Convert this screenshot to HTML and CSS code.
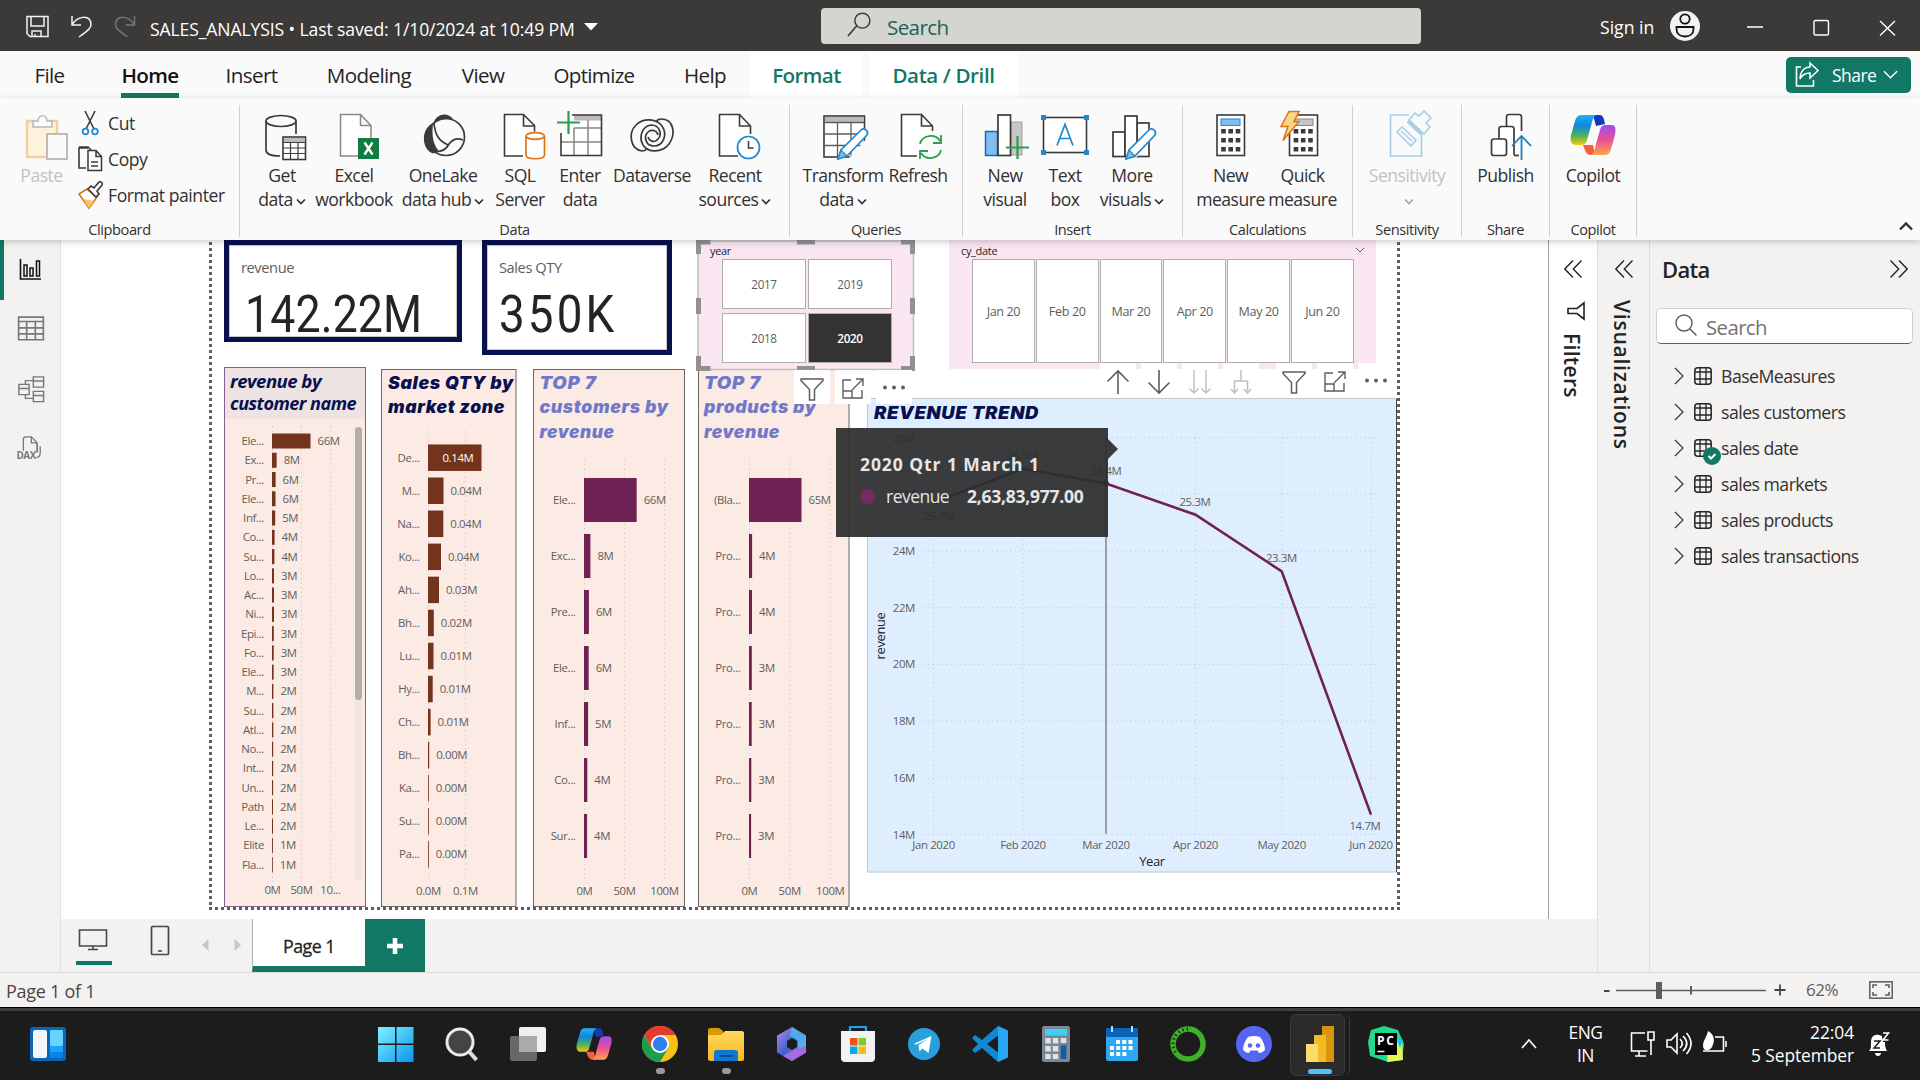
FILE: index.html
```html
<!DOCTYPE html>
<html lang="en">
<head>
<meta charset="utf-8">
<title>SALES_ANALYSIS - Power BI Desktop</title>
<link rel="stylesheet" href="styles.css">
</head>
<body>
<svg class="defs" width="0" height="0">
  <defs>
    <linearGradient id="cpA" x1="0" y1="0" x2="0" y2="1"><stop offset="0" stop-color="#1cb4f5"/><stop offset=".35" stop-color="#1386dd"/><stop offset=".7" stop-color="#4db35a"/><stop offset="1" stop-color="#ffc800"/></linearGradient>
    <linearGradient id="cpB" x1="0" y1="0" x2="0" y2="1"><stop offset="0" stop-color="#9c4df0"/><stop offset=".5" stop-color="#ec4f93"/><stop offset="1" stop-color="#ffa64d"/></linearGradient>
    <linearGradient id="win" x1="0" y1="0" x2="1" y2="1"><stop offset="0" stop-color="#7df3ff"/><stop offset="1" stop-color="#0c93f0"/></linearGradient>
    <linearGradient id="yel" x1="0" y1="0" x2="0" y2="1"><stop offset="0" stop-color="#ffd863"/><stop offset="1" stop-color="#f7b91a"/></linearGradient>
    <linearGradient id="m365" x1="0" y1="0" x2="1" y2="1"><stop offset="0" stop-color="#b58af0"/><stop offset=".5" stop-color="#3c62c8"/><stop offset="1" stop-color="#c58ff5"/></linearGradient>
    <symbol id="copilot" viewBox="0 0 46 40">
      <path d="M23 0h7c3 0 4 4 5 9l-9 2z" fill="#1538c4"/>
      <path d="M13 30h10l2 10h-4c-5 0-6-5-8-10z" fill="#f4603c"/>
      <path d="M11 0h15c-3 2-4 6-5 11l-4 14c-1 4-3 5-6 5H6C1 30 0 26 1 20L5 6c1-4 3-6 6-6z" fill="url(#cpA)"/>
      <path d="M35 40H21c3-2 4-6 5-11l4-14c1-4 3-5 6-5h5c5 0 5 4 4 10l-4 14c-1 4-3 6-6 6z" fill="url(#cpB)"/>
    </symbol>
    <symbol id="funnel" viewBox="0 0 24 24"><path d="M1 2h22v1.500l-8.500 9V23h-5V12.500L1 3.500z" fill="#fff" stroke="#605e5c" stroke-width="1.500"/></symbol>
    <symbol id="focus" viewBox="0 0 24 24"><path d="M10 3H2v18h19v-8M2 14h9v7M15 2h7v7M22 2L11 13" fill="none" stroke="#605e5c" stroke-width="1.400"/></symbol>
    <symbol id="dots" viewBox="0 0 24 24"><g fill="#605e5c"><circle cx="3" cy="10.500" r="2"/><circle cx="12" cy="10.500" r="2"/><circle cx="21" cy="10.500" r="2"/></g></symbol>
    <symbol id="tbl" viewBox="0 0 18 18"><rect x=".8" y=".8" width="16.400" height="16.400" rx="3" fill="none" stroke="#252423" stroke-width="1.500"/><path d="M6 1v16M12 1v16M1 5h16M1 12h16" stroke="#252423" stroke-width="1.300"/></symbol>
    <symbol id="chev" viewBox="0 0 10 18"><path d="M1 1l8 8-8 8" fill="none" stroke="#3b3a39" stroke-width="1.200"/></symbol>
    <symbol id="dbl" viewBox="0 0 18 18"><path d="M9 .5L.8 9 9 17.500M17.500.5L9.300 9l8.200 8.500" fill="none" stroke="#252423" stroke-width="1.400"/></symbol>
    <symbol id="dn" viewBox="0 0 10 8"><path d="M1 1.500l4 4 4-4" fill="none" stroke="currentColor" stroke-width="1.700"/></symbol>
  </defs>
</svg>

<div class="app">
  <header class="titlebar">
    <svg class="quick" viewBox="20 0 120 51">
      <g fill="none" stroke="#f3f2f1" stroke-width="1.500">
        <path d="M27 16.500h17l4 0v20H30l-3-3zM31 17v9h13v-9M32 37v-6h9v6M35 37v-3"/>
        <path d="M72 16v9h9M72 25c5-9 18-11 19-1 0 4-2 6-12 13"/>
        <path d="M134.500 16v9h-9M134.500 25c-5-9-18-11-19-1 0 4 2 6 12 13" stroke="#777573"/>
      </g>
    </svg>
    <span class="filename">SALES_ANALYSIS • Last saved: 1/10/2024 at 10:49 PM</span>
    <svg class="tcaret" viewBox="0 0 14 8"><path d="M0 0h14L7 7.500z" fill="#fff"/></svg>
    <div class="tsearch">
      <svg viewBox="0 0 26 26"><circle cx="16" cy="9" r="7.800" fill="none" stroke="#3b3a39" stroke-width="1.500"/><path d="M10 14.500L1 25" stroke="#3b3a39" stroke-width="1.700"/></svg>
      <span>Search</span>
    </div>
    <span class="signin">Sign in</span>
    <svg class="winctl" viewBox="1668 0 252 51">
      <circle cx="1685" cy="26" r="15" fill="#f3f2f1"/>
      <circle cx="1685" cy="19" r="4.700" fill="none" stroke="#111" stroke-width="1.800"/>
      <path d="M1676.500 27h17v2c0 5-4 7.500-8.500 7.500s-8.500-2.500-8.500-7.500z" fill="none" stroke="#111" stroke-width="1.800"/>
      <g fill="none" stroke="#fff" stroke-width="1.400"><path d="M1747 27h16M1880 21l15 14.500M1895 21l-15 14.500"/><rect x="1814" y="20.500" width="14.500" height="14.500" rx="1.500"/></g>
    </svg>
  </header>

  <nav class="tabs">
    <span class="t file">File</span><span class="t home">Home</span><span class="t insert">Insert</span><span class="t modeling">Modeling</span><span class="t view">View</span><span class="t optimize">Optimize</span><span class="t help">Help</span><span class="t ctx format">Format</span><span class="t ctx drill">Data / Drill</span>
    <button class="share"><svg viewBox="0 0 24 26"><path d="M6 5H1.500v19h17v-6" fill="none" stroke="#fff" stroke-width="1.600"/><path d="M15 1l8 7.500L15 16v-5c-5 0-8 2-10 6 0-7 4-12 10-12z" fill="none" stroke="#fff" stroke-width="1.500"/></svg><span>Share</span><svg class="sdn" viewBox="0 0 16 10"><path d="M1 1l7 7 7-7" fill="none" stroke="#fff" stroke-width="1.600"/></svg></button>
  </nav>

  <section class="ribbon">
    <div class="group g-clip">
      <div class="btns">
        <div class="b off w-paste">
          <svg viewBox="17 112 48 48"><path d="M27 121h29v35H27z" fill="#fdf3da"/><path d="M35 121h-9v36h19M47 121h9v12" fill="none" stroke="#f2cfa0" stroke-width="2.500"/><path d="M32 127v-6h5c0-7 9-7 9 0h5v6z" fill="#fafafa" stroke="#b8b6b4" stroke-width="1.500"/><rect x="46" y="134" width="20" height="25" fill="#fafafa" stroke="#a9a7a5" stroke-width="1.500"/></svg>
          <span>Paste</span>
        </div>
        <div class="cliplist">
          <div><svg viewBox="78 110 26 28"><path d="M85 112l9 18M95 112l-9 18" stroke="#3b3a39" stroke-width="1.600"/><circle cx="85.500" cy="132.500" r="2.800" fill="none" stroke="#1e88d2" stroke-width="1.800"/><circle cx="95" cy="132.500" r="2.800" fill="none" stroke="#1e88d2" stroke-width="1.800"/></svg>Cut</div>
          <div><svg viewBox="78 146 26 28"><path d="M88 149h-9v20h7M79 148h9l3 3" fill="none" stroke="#3b3a39" stroke-width="1.600"/><path d="M88 151.500h8l5.500 6v14H88zM96 151.500v6h5.500M91 163h7M91 167h7" fill="#fafafa" stroke="#3b3a39" stroke-width="1.500"/></svg>Copy</div>
          <div><svg viewBox="78 182 26 28"><path d="M79 195l8-5 10 8-8 11z" fill="#fff" stroke="#dd7413" stroke-width="1.700"/><path d="M83 200l11 2-5 7z" fill="#f9c45e"/><path d="M88 190l3-3 3 2 5-6c2-1 4 1 3 3l-5 6 2 3-3 3z" fill="#fafafa" stroke="#3b3a39" stroke-width="1.600"/></svg>Format painter</div>
        </div>
      </div>
      <div class="gl">Clipboard</div>
    </div>

    <div class="group g-data">
      <div class="btns">
        <div class="b w64"><svg viewBox="258 112 48 48"><g fill="none" stroke="#3b3a39" stroke-width="1.700"><ellipse cx="281" cy="121" rx="15" ry="5.500"/><path d="M266 121v29c0 4 6 6 14 6M296 121v13"/></g><rect x="283" y="137" width="22.500" height="22.500" fill="#fff" stroke="#3b3a39" stroke-width="1.600"/><path d="M284 138h20.500v4H284z" fill="#bdbbb9"/><path d="M283 142.500h22.500M283 148h22.500M283 153.500h22.500M290.500 142v17M298 142v17" stroke="#3b3a39" stroke-width="1.200"/></svg><span>Get<br>data<svg class="dn"><use href="#dn"/></svg></span></div>
        <div class="b w80"><svg viewBox="330 112 48 48"><path d="M358 156h-17.500V114.500h20l10.500 11v13M360.500 114.500v11H371" fill="#fff" stroke="#8a8886" stroke-width="1.500"/><rect x="358" y="138" width="21" height="21" fill="#107c41"/><path d="M364.500 142.500l8 12M372.500 142.500l-8 12" stroke="#fff" stroke-width="2.400"/></svg><span>Excel<br>workbook</span></div>
        <div class="b w98"><svg viewBox="419 112 48 48"><circle cx="446" cy="137" r="18.500" fill="#fafafa" stroke="#3b3a39" stroke-width="1.700"/><path d="M433 124c4-12 17-12 21-3-7-3-14-2-21 3zM433 123c-11 5-12 22-3 29 4 3 8 0 8-2-6-8-6-17-5-27z" fill="#3b3a39"/><path d="M434 123c1 12 5 18 14 22M430 151c10 2 16-1 19-7 4-5 9-6 14-4" fill="none" stroke="#3b3a39" stroke-width="1.700"/></svg><span>OneLake<br>data hub<svg class="dn"><use href="#dn"/></svg></span></div>
        <div class="b w56"><svg viewBox="496 112 48 48"><path d="M523 156h-18.500V114.500h19l11 11v6M523.500 114.500v11.500h11" fill="#fff" stroke="#3b3a39" stroke-width="1.600"/><path d="M526 136v19c0 5 18.500 5 18.500 0v-19" fill="#fff" stroke="#dd7413" stroke-width="1.700"/><ellipse cx="535.200" cy="136" rx="9.200" ry="3.400" fill="#fff" stroke="#dd7413" stroke-width="1.700"/></svg><span>SQL<br>Server</span></div>
        <div class="b w64"><svg viewBox="556 112 48 48"><rect x="561" y="115" width="40.500" height="40.500" fill="#fff"/><path d="M574 115h27.500v5.500H574z" fill="#bdbbb9"/><path d="M574 128h27M561 142h40.500M574 128v27M588 120v35" stroke="#8a8886" stroke-width="1.500"/><path d="M572 115h29.500v40.500H561V132" fill="none" stroke="#3b3a39" stroke-width="1.600"/><path d="M557 111h14v22h-14z" fill="#fafafa"/><path d="M568.500 111v23M557 122.500h23" stroke="#2d9d4e" stroke-width="2.200"/></svg><span>Enter<br>data</span></div>
        <div class="b w80"><svg viewBox="628 112 48 48"><g fill="none" stroke="#3b3a39" stroke-width="1.700"><path d="M642 151c-12-2-14-18-6-26 7-7 20-7 26 1 6 9 1 20-8 20-8 0-11-9-6-14 3-3 9-2 10 3"/><path d="M661 119c13 0 15 15 8 25-7 9-21 9-26 1-5-9 0-19 8-20 9 0 12 10 6 15-3 3-8 1-9-3"/><path d="M661 119c-2 0-4 1-5 3M642 151c3 0 4-1 5-2"/></g></svg><span>Dataverse</span></div>
        <div class="b w86"><svg viewBox="711 112 48 48"><path d="M738 156h-18.500V114.500h20l11 11.500v8M739.500 114.500V126h11" fill="#fff" stroke="#3b3a39" stroke-width="1.600"/><circle cx="748.500" cy="147.500" r="11" fill="#fff" stroke="#1e88d2" stroke-width="1.700"/><path d="M748.500 141v7h5" fill="none" stroke="#3b3a39" stroke-width="1.500"/></svg><span>Recent<br>sources<svg class="dn"><use href="#dn"/></svg></span></div>
      </div>
      <div class="gl">Data</div>
    </div>

    <div class="group g-query">
      <div class="btns">
        <div class="b w78"><svg viewBox="819 112 48 48"><rect x="824" y="116" width="40.500" height="41" fill="#fff" stroke="#3b3a39" stroke-width="1.600"/><path d="M825 117h39v5h-39z" fill="#bdbbb9"/><path d="M824 122.500h40.500M824 134h40.500M824 145.500h40.500M837.500 122v35M851 122v35" stroke="#605e5c" stroke-width="1.300"/><path d="M849 158h20v-22z" fill="#fafafa"/><path d="M838 159l3-9 20-20c3-3 8 1 6 5l-20 21z" fill="#fff" stroke="#1e88d2" stroke-width="1.700"/><path d="M838 159l3-9 6 6z" fill="#83b9ec" stroke="#1e88d2" stroke-width="1.200"/></svg><span>Transform<br>data<svg class="dn"><use href="#dn"/></svg></span></div>
        <div class="b w72"><svg viewBox="894 112 48 48"><path d="M917 156h-15.500V114.500h20l11 11.500v5M921.500 114.500V126h11" fill="#fff" stroke="#3b3a39" stroke-width="1.600"/><path d="M920 144c2-9 15-11 20-3M941 135v8h-8M941 150c-2 9-15 11-20 3M920 159v-8h8" fill="none" stroke="#2d9d4e" stroke-width="1.800"/></svg><span>Refresh</span></div>
      </div>
      <div class="gl">Queries</div>
    </div>

    <div class="group g-insert">
      <div class="btns">
        <div class="b w60"><svg viewBox="981 112 48 48"><rect x="985.500" y="131.500" width="12" height="24" fill="#83bdf0" stroke="#0f6cbd" stroke-width="1.500"/><rect x="1011" y="122" width="11" height="33" fill="#c8c6c4" stroke="#a19f9d"/><rect x="998" y="115" width="12.500" height="40.500" fill="#fff" stroke="#3b3a39" stroke-width="1.700"/><path d="M1006 147.500h23M1017.500 136v23" stroke="#2d9d4e" stroke-width="2.200"/></svg><span>New<br>visual</span></div>
        <div class="b w60"><svg viewBox="1041 112 48 48"><rect x="1043.500" y="117.500" width="43" height="35" fill="#fff" stroke="#3b3a39" stroke-width="1.600"/><path d="M1041 115h5v5h-5zM1084 115h5v5h-5zM1041 150h5v5h-5zM1084 150h5v5h-5z" fill="#1e88d2"/><path d="M1057 145.500l8-21 8 21M1060 138.500h10.500" fill="none" stroke="#1e88d2" stroke-width="1.700"/></svg><span>Text<br>box</span></div>
        <div class="b w74"><svg viewBox="1108 112 48 48"><g fill="#fff" stroke="#3b3a39" stroke-width="1.700"><rect x="1113" y="132" width="12" height="24.500"/><rect x="1137" y="123" width="12" height="33.500"/><rect x="1125" y="116" width="12" height="40.500"/></g><path d="M1136 158l18-22v-12l-26 28z" fill="#fafafa"/><path d="M1126 159l3-9 20-20c3-3 8 1 6 5l-20 21z" fill="#fff" stroke="#1e88d2" stroke-width="1.700"/><path d="M1126 159l3-9 6 6z" fill="#83b9ec" stroke="#1e88d2" stroke-width="1.200"/></svg><span>More<br>visuals<svg class="dn"><use href="#dn"/></svg></span></div>
      </div>
      <div class="gl">Insert</div>
    </div>

    <div class="group g-calc">
      <div class="btns">
        <div class="b w72"><svg viewBox="1207 112 48 48"><rect x="1217" y="115" width="27.500" height="40.500" fill="#fff" stroke="#3b3a39" stroke-width="1.600"/><rect x="1221" y="119" width="19" height="6.500" fill="#83bdf0" stroke="#1e88d2"/><path d="M1223.500 129v24M1230.700 129v24M1238 129v24" stroke="#3b3a39" stroke-width="4.600" stroke-dasharray="4.600 4.400"/></svg><span>New<br>measure</span></div>
        <div class="b w72"><svg viewBox="1279 112 48 48"><rect x="1289.500" y="115" width="28" height="40.500" fill="#fff" stroke="#3b3a39" stroke-width="1.600"/><rect x="1293" y="119" width="20" height="6.500" fill="#c8c6c4" stroke="#8a8886"/><path d="M1296 129v24M1303.200 129v24M1310.500 129v24" stroke="#3b3a39" stroke-width="4.600" stroke-dasharray="4.600 4.400"/><path d="M1289 111.500h10l-5 10h5l-16 19 5-14h-7z" fill="#fbd48c" stroke="#dd7413" stroke-width="1.500"/></svg><span>Quick<br>measure</span></div>
      </div>
      <div class="gl">Calculations</div>
    </div>

    <div class="group g-sens">
      <div class="btns">
        <div class="b off w84"><svg viewBox="1383 112 48 48"><path d="M1409 115h-18.500v41h31v-22" fill="none" stroke="#a6cfe6" stroke-width="1.700"/><g fill="none" stroke="#a6cfe6" stroke-width="1.600"><path d="M1397 132l5-5 14 13-5 6zM1401 131l11 10"/><path d="M1409 120l6-7 4 3 5-5 7 7-5 5 4 4-6 7z"/><path d="M1408 121l14 13" stroke-width="4"/></g></svg><span>Sensitivity<br><svg class="dn"><use href="#dn"/></svg></span></div>
      </div>
      <div class="gl">Sensitivity</div>
    </div>
    <div class="group g-share">
      <div class="btns">
        <div class="b w84"><svg viewBox="1481 112 48 48"><g fill="#fff" stroke="#3b3a39" stroke-width="1.700"><path d="M1505.500 155v-38c0-1.500 1-2.500 2.500-2.500h10c1.500 0 2.500 1 2.500 2.500v14"/><path d="M1498 155v-26c0-1.500 1-2.500 2.500-2.500h10c1.500 0 2.500 1 2.500 2.500v26"/><path d="M1513 155.500h5"/><rect x="1490.500" y="139" width="15" height="16.500" rx="2.500"/></g><path d="M1520.500 160v-23M1511 146l9.500-10 9.500 10" fill="none" stroke="#1e7fc0" stroke-width="1.800"/></svg><span>Publish</span></div>
      </div>
      <div class="gl">Share</div>
    </div>
    <div class="group g-cop">
      <div class="btns"><div class="b w84"><svg viewBox="0 0 48 48"><use href="#copilot" x="1" y="2" width="46" height="42"/></svg><span>Copilot</span></div></div>
      <div class="gl">Copilot</div>
    </div>
    <svg class="collapse" viewBox="0 0 16 10"><path d="M2 8.500l6-6 6 6" fill="none" stroke="#323130" stroke-width="2.400"/></svg>
  </section>

  <main class="work">
    <aside class="rail">
      <div class="ri on"><svg viewBox="19 258 23 23"><path d="M20.500 259v20H41" fill="none" stroke="#111" stroke-width="1.600"/><path d="M24 265h3v11h-3zM30 268h3v8h-3zM36.500 261h3v15h-3z" fill="none" stroke="#111" stroke-width="1.500"/></svg></div>
      <div class="ri"><svg viewBox="18 316 26 26"><path d="M19.500 318h23v21h-23zM19.500 322h23M19.500 328h23M19.500 333.500h23M27 322v17M35 322v17" fill="none" stroke="#797775" stroke-width="1.500"/></svg></div>
      <div class="ri"><svg viewBox="16 374 30 30"><g fill="none" stroke="#797775" stroke-width="1.500"><path d="M33.500 376h11v11h-11zM33.500 380.500h11M33.500 391.500h11v11h-11zM33.500 396h11M18 384h11v11H18zM18 388.500h11M25 384v-4h8M25 395v4h8"/></g></svg></div>
      <div class="ri dx"><svg viewBox="14 434 30 30"><path d="M23 451v-12.500c0-1.500 1-2.500 2.500-2.500h6l6 6v11M31.500 436v6.500h6M41 446v7c0 3-1 5-4 5M38 443v9" fill="none" stroke="#797775" stroke-width="1.400"/><text x="15.500" y="460" class="dax" textLength="21">DAX</text></svg></div>
    </aside>

    <div class="center">
      <div class="upper">
        <div class="canvas">
          <div class="frame fl"></div><div class="frame fr"></div><div class="frame fb"></div>
          <div class="card c1"><span>revenue</span><svg viewBox="0 0 180 48"><text x="0" y="48" transform="scale(.86 1)" textLength="206">142.22M</text></svg></div>
          <div class="card c2"><span>Sales QTY</span><svg viewBox="0 0 180 48"><text x="0" y="48" transform="scale(.88 1)" textLength="131">350K</text></svg></div>

          <div class="slicer cydate">
            <div class="sh"><span>cy_date</span><svg viewBox="0 0 10 6"><path d="M1 1l4 4 4-4" fill="none" stroke="#605e5c"/></svg></div>
            <div class="months"><i>Jan 20</i><i>Feb 20</i><i>Mar 20</i><i>Apr 20</i><i>May 20</i><i>Jun 20</i></div>
          </div>
          <div id="charts"></div>
          <div class="tools t2">
            <b><svg viewBox="0 0 24 24"><path d="M12 24V1M1.500 11.500L12 1l10.500 10.500" fill="none" stroke="#605e5c" stroke-width="1.600"/></svg></b>
            <b><svg viewBox="0 0 24 24"><path d="M12 0v23M1.500 12.500L12 23l10.500-10.500" fill="none" stroke="#605e5c" stroke-width="1.600"/></svg></b>
            <b><svg viewBox="0 0 24 24"><path d="M6 0v23M1.500 18.500L6 23l4.500-4.500M18 0v23M13.500 18.500L18 23l4.500-4.500" fill="none" stroke="#c2c0be" stroke-width="1.500"/></svg></b>
            <b><svg viewBox="0 0 24 24"><path d="M12 0v11M5.500 23V11h13v12M2 19l3.500 4L9 19M15 19l3.500 4 3.500-4" fill="none" stroke="#c2c0be" stroke-width="1.500"/></svg></b>
            <b class="gap"><svg><use href="#funnel"/></svg></b><b><svg><use href="#focus"/></svg></b><b><svg><use href="#dots"/></svg></b>
          </div>
          <div class="slicer year">
            <div class="sh"><span>year</span></div>
            <div class="years"><i>2017</i><i>2019</i><i>2018</i><i class="sel">2020</i></div>
            <svg class="handles" viewBox="695 240 221 136"><rect x="698" y="240.500" width="215.500" height="128.500" transform="translate(0 .5)" fill="none" stroke="#bdbbb9" stroke-width="1.500"/><path d="M698.500 254v-12h12M901 242h11.500v12M698.500 356v12.500h12M901 368.500h11.500V356M797 242h18M797 368.500h18M698.500 298v16M912.500 298v16" fill="none" stroke="#919191" stroke-width="5"/></svg>
          </div>
          <div class="tools t1"><b><svg><use href="#funnel"/></svg></b><b><svg><use href="#focus"/></svg></b><b><svg><use href="#dots"/></svg></b></div>
          <div class="tip">
            <div class="tt">2020 Qtr 1 March 1</div>
            <div class="tr"><em></em><span>revenue</span><strong>2,63,83,977.00</strong></div>
          </div>
        </div>
        <aside class="filters">
          <svg class="dblc"><use href="#dbl"/></svg>
          <svg class="fic" viewBox="0 0 18 18"><path d="M17 1v16l-7-5.500H1v-5h9z" fill="none" stroke="#252423" stroke-width="1.600"/></svg>
          <span class="vert">Filters</span>
        </aside>
      </div>
      <footer class="pages">
        <div class="dev on"><svg viewBox="78 928 30 24"><path d="M79.500 931h27v16h-27zM93 947v3M88 950.500h10" fill="none" stroke="#484644" stroke-width="1.600"/></svg></div>
        <div class="dev ph"><svg viewBox="150 925 20 31"><rect x="151.500" y="926.500" width="17" height="28" rx="1" fill="none" stroke="#484644" stroke-width="1.700"/><path d="M158 951h4" stroke="#484644" stroke-width="1.500"/></svg></div>
        <svg class="arr" viewBox="0 0 8 12"><path d="M7.500 0v12L1 6z" fill="#c8c6c4"/></svg>
        <svg class="arr a2" viewBox="0 0 8 12"><path d="M.5 0v12L7 6z" fill="#c8c6c4"/></svg>
        <div class="ptab">Page 1</div>
        <div class="padd"><svg viewBox="0 0 16 16"><path d="M8 0v16M0 8h16" stroke="#fff" stroke-width="4.600"/></svg></div>
      </footer>
    </div>

    <aside class="viz"><svg class="dblc"><use href="#dbl"/></svg><span class="vert">Visualizations</span></aside>
    <aside class="data">
      <div class="dh"><span>Data</span><svg class="flip"><use href="#dbl"/></svg></div>
      <div class="ds"><svg viewBox="0 0 22 22"><circle cx="9" cy="9" r="8" fill="none" stroke="#605e5c" stroke-width="1.400"/><path d="M15 15l6.500 6.500" stroke="#605e5c" stroke-width="1.500"/></svg><span>Search</span></div>
      <ul>
        <li><svg class="c"><use href="#chev"/></svg><svg class="g"><use href="#tbl"/></svg>BaseMeasures</li>
        <li><svg class="c"><use href="#chev"/></svg><svg class="g"><use href="#tbl"/></svg>sales customers</li>
        <li><svg class="c"><use href="#chev"/></svg><svg class="g"><use href="#tbl"/></svg>sales date<svg class="badge" viewBox="0 0 18 18"><circle cx="9" cy="9" r="9" fill="#117865"/><path d="M5.500 9l2.500 2.500 4.500-4.500" fill="none" stroke="#fff" stroke-width="2"/></svg></li>
        <li><svg class="c"><use href="#chev"/></svg><svg class="g"><use href="#tbl"/></svg>sales markets</li>
        <li><svg class="c"><use href="#chev"/></svg><svg class="g"><use href="#tbl"/></svg>sales products</li>
        <li><svg class="c"><use href="#chev"/></svg><svg class="g"><use href="#tbl"/></svg>sales transactions</li>
      </ul>
    </aside>
  </main>

  <div class="status">
    <span>Page 1 of 1</span>
    <svg viewBox="1600 973 190 34"><path d="M1604 991h5.500M1774.500 990h11M1780 984.500v11" stroke="#484644" stroke-width="1.800"/><path d="M1616 990.500h150" stroke="#605e5c" stroke-width="1.300"/><path d="M1691 986v8.500" stroke="#605e5c" stroke-width="2"/><path d="M1659 982v17" stroke="#605e5c" stroke-width="6"/></svg>
    <span class="pct">62%</span>
    <svg class="fit" viewBox="0 0 24 18"><rect x=".8" y=".8" width="22.400" height="16.400" fill="none" stroke="#605e5c" stroke-width="1.500"/><path d="M4 7V4h4M16 4h4v3M4 11v3h4M16 14h4v-3" fill="none" stroke="#605e5c" stroke-width="1.600"/></svg>
  </div>

  <div class="taskbar">
    <div class="slot widgets"><svg viewBox="0 0 36 34"><rect width="36" height="34" rx="3" fill="#0a64b8"/><rect x="3" y="3" width="14" height="28" rx="2" fill="#f2f6fa"/><rect x="20" y="3" width="13" height="16" rx="1" fill="#66d4ff"/><rect x="20" y="19" width="13" height="6" fill="#1ea2f5"/><rect x="20" y="25" width="13" height="6" fill="#0b83e8"/></svg></div>
    <div class="slot"><svg viewBox="0 0 36 36"><path d="M0 1h17v16.500H0zM18.500 1h17v16.500h-17zM0 19h17v17H0zM18.500 19h17v17h-17z" fill="url(#win)"/></svg></div>
    <div class="slot"><svg viewBox="0 0 36 36"><circle cx="16" cy="16" r="13" fill="#444" stroke="#ececec" stroke-width="3"/><path d="M25.500 26l7 8" stroke="#ddd" stroke-width="4"/></svg></div>
    <div class="slot"><svg viewBox="0 0 36 36"><rect x="9" y="1" width="27" height="25" rx="2" fill="#f0f0f0"/><rect x="0" y="10" width="27" height="25" rx="2" fill="#707070" fill-opacity=".9"/><path d="M9 10h18v16H9z" fill="#aaa"/></svg></div>
    <div class="slot"><svg viewBox="0 0 36 36"><use href="#copilot" x="0" y="1" width="36" height="34"/></svg></div>
    <div class="slot run"><svg viewBox="0 0 36 36"><circle cx="18" cy="18" r="18" fill="#fbc116"/><path d="M2.400 9A18 18 0 0 1 33.600 9H18L10 22z" fill="#e33b2e"/><path d="M2.400 9A18 18 0 0 0 18 36l8-13.500H10z" fill="#1e9e4a"/><circle cx="18" cy="18" r="9" fill="#fff"/><circle cx="18" cy="18" r="7.200" fill="#2d7ff0"/></svg></div>
    <div class="slot run"><svg viewBox="0 0 36 36"><path d="M0 4c0-1 1-2 2-2h9l4 3v7H0z" fill="#d99a08"/><path d="M0 9h13l4-4h17c1 0 2 1 2 2v26c0 1-1 2-2 2H2c-1 0-2-1-2-2z" fill="url(#yel)"/><path d="M6 35V27c0-2 1-3 3-3h18c2 0 3 1 3 3v8z" fill="#0f78d0"/><path d="M11 30h14" stroke="#0a4f94" stroke-width="2"/></svg></div>
    <div class="slot"><svg viewBox="0 0 36 36"><path d="M18 1l14 8.500v17L18 35 3 26.500v-17z" fill="url(#m365)"/><path d="M18 1l14 8.500v17l-8-5v-7l-8-4.500z" fill="#4cc3f5" fill-opacity=".75"/><path d="M32 20v6.500L18 35l-9-5 15-8z" fill="#a36be0"/><path d="M18 12l5 3v6l-5 3-5-3v-6z" fill="#1c1c1c"/></svg></div>
    <div class="slot"><svg viewBox="0 0 36 36"><path d="M10 6V1h16v5" fill="none" stroke="#1ea2f5" stroke-width="2.200"/><path d="M1 5h34v27c0 2-1 4-4 4H5c-3 0-4-2-4-4z" fill="#f2f2f2"/><path d="M10 12h7.500v7.500H10z" fill="#f1511b"/><path d="M18.500 12H26v7.500h-7.500z" fill="#80cc28"/><path d="M10 20.500h7.500V28H10z" fill="#00adef"/><path d="M18.500 20.500H26V28h-7.500z" fill="#fbbc09"/></svg></div>
    <div class="slot"><svg viewBox="0 0 36 36"><circle cx="18" cy="18" r="16" fill="#2a9fdc"/><path d="M7.500 18l18-8-3 17-6-4.500-3 3-1-6.500 9-6-11 5.500z" fill="#fff"/></svg></div>
    <div class="slot"><svg viewBox="0 0 36 36"><path d="M26 0L10 14l-7-5-3 3 6 6-6 6 3 3 7-5 16 14z" fill="#1287d4"/><path d="M26 9.500L15 18l11 8.500z" fill="#1c1c1c"/><path d="M26 0l10 4.500v27L26 36z" fill="#29a5f3"/></svg></div>
    <div class="slot"><svg viewBox="0 0 36 36"><rect x="4" width="28" height="36" rx="2" fill="#7b8792"/><path d="M7 3h22v6.500H7z" fill="#3fd0fa"/><path d="M10 12v21M17.500 12v21M25.500 12v5" stroke="#dde3e8" stroke-width="5.500" stroke-dasharray="5.500 2.500"/><path d="M22.700 19.500h5.600V33h-5.600z" fill="#0f5ca8"/></svg></div>
    <div class="slot"><svg viewBox="0 0 36 36"><rect x="2" y="2" width="32" height="33" rx="2" fill="#2fa8f2"/><path d="M2 2h32v9H2z" fill="#0a62b4"/><path d="M8 0v6M28 0v6" stroke="#a9dcff" stroke-width="2"/><path d="M12 16h18M6 22h24M6 28h18" stroke="#fff" stroke-width="4" stroke-dasharray="4 2.200"/></svg></div>
    <div class="slot"><svg viewBox="0 0 36 36"><circle cx="18" cy="18" r="15" fill="none" stroke="#3eb02a" stroke-width="5.500"/><path d="M18 3A15 15 0 0 0 6 27" fill="none" stroke="#1c1c1c" stroke-width="3" stroke-dasharray="1.200 3.200"/></svg></div>
    <div class="slot"><svg viewBox="0 0 36 36"><circle cx="18" cy="18" r="18" fill="#5865f2"/><path d="M12 11c4-1.500 8-1.500 12 0 3 4 5 8 5 13-2 2-4 3-6 3l-1.500-2.500h-7L13 27c-2 0-4-1-6-3 0-5 2-9 5-13z" fill="#fff"/><circle cx="14" cy="19.500" r="2.300" fill="#5865f2"/><circle cx="22" cy="19.500" r="2.300" fill="#5865f2"/></svg></div>
    <div class="slot active"><svg viewBox="0 0 36 36"><path d="M20 0h12v36H20z" fill="#d9950c"/><path d="M12 9h12v27H12z" fill="#f3bb23"/><path d="M4 18h12v18H4z" fill="#fbdc6a"/></svg></div>
    <div class="slot"><svg viewBox="0 0 36 36"><path d="M3 4l13-4 14 4 6 14-2 16-14 2L2 30 0 16z" fill="#22d88f"/><path d="M20 20l14-6 1 20-16 2z" fill="#e5f553"/><path d="M28 12l7 2-3 8z" fill="#18c8e8"/><path d="M7 7h22v22H7z" fill="#000"/><text x="9" y="19" class="pc" textLength="17">PC</text><path d="M9.500 25.500h7" stroke="#fff" stroke-width="1.500"/></svg></div>
    <div class="tray">
      <svg class="up" viewBox="0 0 16 10"><path d="M1 9l7-8 7 8" fill="none" stroke="#fff" stroke-width="1.700"/></svg>
      <div class="lang">ENG<br>IN</div>
      <svg class="net" viewBox="1630 1028 100 32"><g fill="none" stroke="#fff" stroke-width="1.600"><path d="M1646 1033h-13.500v18h16M1640 1051v5M1636 1056h11M1649 1032h6v8h-6zM1652 1040v15"/><path d="M1668 1040h4l6-6v19l-6-6h-4zM1681 1039c3 3 3 6 0 9M1684 1036c5 5 5 10 0 15M1687.500 1033c6 7 6 14 0 21"/><path d="M1716 1037h8.500v14H1704M1727 1041v6" /></g><path d="M1709 1031c7 4 7 10 4 16-3 5-9 4-9-1 0-6 4-9 5-15z" fill="#fff"/></svg>
      <div class="clock">22:04<br>5 September</div>
      <svg class="bell" viewBox="0 0 24 26"><path d="M3 20c2-2 2-4 2-9 0-6 4-8 8-7 5 1 6 4 6 8 0 4 1 6 2 8zM9 22h6c0 4-6 4-6 0z" fill="#fff"/><path d="M8 10h6l-6 7h6" fill="none" stroke="#1c1c1c" stroke-width="1.500"/><path d="M15 0h9v11h-7z" fill="#1c1c1c"/><path d="M17 2h5.500l-5.500 7h5.500" fill="none" stroke="#fff" stroke-width="1.600"/></svg>
    </div>
  </div>
</div>
<script src="charts.js"></script>
</body>
</html>
```
FILE: styles.css
```css
* { box-sizing: border-box; letter-spacing: -.03em; }
body { margin: 0; width: 1920px; height: 1080px; overflow: hidden; background: #fff; font-family: "Open Sans", "Noto Sans", sans-serif; color: #252423; }
svg { overflow: visible; flex: none; }
.defs { position: absolute; }
.app { display: flex; flex-direction: column; height: 1080px; }

/* title bar */
.titlebar { display: flex; align-items: center; height: 51px; padding-left: 20px; background: #3b3a38; color: #fff; font-size: 17.600px; }
.quick { width: 120px; height: 51px; }
.filename { width: 435px; padding: 6px 0 0 10px; white-space: nowrap; letter-spacing: -.007em; }
.tcaret { width: 14px; height: 8px; margin: 3px 1px 0 9px; }
.tsearch { display: flex; align-items: center; gap: 15px; width: 600px; height: 36px; margin-left: 222px; padding-left: 26px; border-radius: 4px; background: #d4d4d1; color: #1d6355; font-size: 20.600px; }
.tsearch svg { width: 25px; height: 25px; margin-bottom: 3px; }
.tsearch span { padding-top: 2px; }
.signin { width: 69px; margin-left: 179px; padding-top: 2px; letter-spacing: 0; }
.winctl { width: 252px; height: 51px; margin-left: -1px; }

/* tabs */
.tabs { display: flex; height: 47px; padding-left: 10px; background: #fafafa; font-size: 20.600px; }
.t { display: flex; align-items: center; justify-content: center; height: 47px; white-space: nowrap; }
.file { width: 79px; margin-right: 8px; }
.home { position: relative; width: 106px; font-weight: 600; color: #111; }
.home::after { content: ""; position: absolute; left: 24px; right: 24px; bottom: 0; height: 5px; background: #117865; }
.insert { width: 97px; } .modeling { width: 138px; } .view { width: 90px; } .optimize { width: 133px; padding-right: 1px; letter-spacing: -.035em; } .help { width: 89px; padding-right: 1px; }
.ctx { background: #fff; color: #117865; font-weight: 600; }
.format { width: 113px; margin-right: 6px; } .drill { width: 149px; letter-spacing: -.02em; }
.share { display: flex; align-items: center; width: 125px; height: 36px; margin: 6px 9px 0 auto; padding: 0 0 0 9px; border: 0; border-radius: 5px; background: #117865; color: #fff; font: 500 17.500px "Open Sans", sans-serif; }
.share svg { width: 24px; height: 26px; }
.share span { margin: 0 7px 0 13px; }
.share .sdn { width: 15px; height: 10px; }

/* ribbon */
.ribbon { position: relative; z-index: 5; display: flex; height: 142px; padding-top: 7px; background: #fafafa; box-shadow: 0 2px 7px rgba(0,0,0,.2); }
.group { display: flex; flex-direction: column; justify-content: space-between; height: 132px; border-right: 1px solid #d2d0ce; }
.btns { display: flex; justify-content: center; padding-top: 7px; }
.g-clip { width: 240px; } .g-clip .btns { justify-content: flex-start; }
.g-data { width: 550px; } .g-data .btns { justify-content: flex-start; padding-left: 10px; }
.g-query { width: 173px; } .g-query .btns { justify-content: flex-start; padding-left: 14px; }
.g-insert { width: 220px; } .g-insert .btns { justify-content: flex-start; padding-left: 12px; }
.g-calc { width: 170px; } .g-calc .btns { padding-right: 2px; }
.g-sens { width: 109px; } .g-share { width: 88px; } .g-cop { width: 87px; }
.b { display: flex; flex-direction: column; align-items: center; gap: 3px; flex: none; text-align: center; font-size: 17.600px; line-height: 24px; white-space: nowrap; color: #323130; }
.b > svg { width: 48px; height: 48px; }
.off { color: #c4c2c0; }
.dn { width: 10px; height: 8px; margin-left: 3px; color: #323130; }
.off .dn { color: #a8a6a4; }
.w-paste { width: 83px; }
.w56 { width: 56px; } .w60 { width: 60px; } .w64 { width: 64px; } .w72 { width: 72px; } .w74 { width: 74px; } .w78 { width: 78px; } .w80 { width: 80px; } .w84 { width: 84px; } .w86 { width: 86px; } .w98 { width: 98px; }
.cliplist { display: flex; flex-direction: column; gap: 8px; margin-left: -5px; font-size: 17.600px; color: #323130; }
.cliplist div { display: flex; align-items: center; gap: 4px; height: 28px; white-space: nowrap; margin-top: -3px; margin-bottom: 3px; letter-spacing: -.025em; }
.cliplist svg { width: 26px; height: 28px; }
.gl { height: 17px; line-height: 18px; text-align: center; font-size: 14.600px; color: #323130; }
.collapse { width: 16px; height: 10px; margin: 116px 0 0 261px; }

/* work area */
.work { display: flex; height: 732px; }
.rail { width: 61px; background: #f3f2f1; border-right: 1px solid #e1dfdd; }
.ri { display: flex; align-items: center; justify-content: center; width: 60px; height: 60px; border-left: 4px solid transparent; padding: 0 3px 2px 0; }
.ri.on { border-color: #117865; }
.ri svg { width: 28px; height: 28px; }
.ri.on svg { width: 23px; height: 23px; }
.ri.dx { padding-right: 7px; }
.dax { font: 700 10.500px "Open Sans", sans-serif; fill: #797775; }
.center { display: flex; flex-direction: column; width: 1536px; }
.upper { display: flex; height: 679px; }
.canvas { position: relative; width: 1487px; height: 679px; overflow: hidden; background: #fff; }
.frame { position: absolute; }
.fl, .fr { top: 2px; width: 3px; height: 668px; background: repeating-linear-gradient(#605e5c 0 3px, transparent 3px 6px); }
.fl { left: 148px; } .fr { left: 1336px; }
.fb { left: 148px; top: 667px; width: 1191px; height: 3px; background: repeating-linear-gradient(90deg, #605e5c 0 3px, transparent 3px 6px); }
.card { position: absolute; top: 0; border: 5px solid #08104f; background: #fff; padding: 12px 0 0 12px; font-size: 14.700px; color: #605e5c; box-shadow: inset 0 0 0 1px #c8c6c4; }
.card span { display: block; line-height: 20px; }
.card svg { display: block; width: 180px; height: 48px; margin: 7px 0 0 4px; }
.card text { font: 400 52px Roboto, sans-serif; fill: #252423; letter-spacing: 0; }
.c1 { left: 163px; width: 238px; height: 102px; }
.c2 { left: 421px; width: 190px; height: 115px; }
.c2 svg { margin-left: 0; }
.slicer { position: absolute; background: #fae6f2; font-size: 11.700px; }
.slicer i { display: flex; align-items: center; justify-content: center; font-style: normal; background: #fff; border: 1.500px solid #b0aeac; color: #605e5c; }
.sh { display: flex; justify-content: space-between; align-items: center; height: 19px; line-height: 19px; padding-top: 1px; font-size: 11px; }
.sh svg { width: 10px; height: 6px; margin-right: 11px; }
.year { left: 637px; top: 1px; width: 216px; height: 129px; }
.year .sh { padding-left: 12px; padding-top: 0; height: 18px; }
.years { display: grid; grid-template-columns: 84px 84px; grid-template-rows: 50px 50px; gap: 3.500px 2px; margin-left: 24px; }
.years .sel { background: #333; color: #fff; font-weight: 600; }
.handles { position: absolute; left: -3px; top: -1px; width: 221px; height: 136px; }
.cydate { left: 888px; top: 0; width: 427px; height: 129px; }
.cydate .sh { padding-left: 12px; }
.months { display: grid; grid-template-columns: repeat(6, 62.800px); gap: 1px; height: 104px; margin-left: 23px; font-size: 12.600px; }
.tools { position: absolute; display: flex; gap: 5px; }
.tools b { display: flex; align-items: center; justify-content: center; width: 36px; height: 34px; padding-top: 4px; background: #fff; }
.tools svg { width: 24px; height: 24px; }
.tools .gap { margin-left: 12px; }
.t2 { left: 1039px; top: 123px; }
.t1 { left: 733px; top: 130px; }
.viz-box { position: absolute; }
.viz-box svg { display: block; }
.viz-box text { font-size: 11.400px; fill: #605e5c; }
.viz-box .in { fill: #fff; }
.viz-box .seg { font: italic 700 17.500px "Open Sans", sans-serif; fill: #08104f; }
.viz-box .blk { font: italic 900 17px Inter, "Liberation Sans", sans-serif; fill: #08104f; letter-spacing: .6px; }
.viz-box .soft { fill: #7079c8; }
.viz-box .axis { font-size: 13px; fill: #252423; }
.grid { stroke: #cfc8c4; stroke-width: 1; stroke-dasharray: 1.300 3.300; }
.bgrid { stroke: #c3cdd6; stroke-width: 1; stroke-dasharray: 1.300 3.300; }
.tip { position: absolute; left: 775px; top: 188px; width: 272px; height: 109px; padding: 24px 0 0 24px; background: rgba(45,45,45,.93); color: #e6e6e6; font-size: 17.500px; }
.tip::after { content: ""; position: absolute; left: 272px; top: 11px; border: 10px solid transparent; border-left-color: rgba(45,45,45,.93); border-right: 0; }
.tt { font-weight: 700; line-height: 24px; letter-spacing: .053em; }
.tr { display: flex; align-items: center; margin-top: 8px; line-height: 24px; }
.tr em { width: 15px; height: 15px; border-radius: 50%; background: #742c60; }
.tr span { width: 81px; margin-left: 11px; letter-spacing: -.03em; }
.tr strong { font-weight: 700; letter-spacing: -.014em; }

/* side panes */
.filters { display: flex; flex-direction: column; align-items: center; width: 49px; padding-top: 20px; background: #fff; border-left: 1px solid #a19f9d; }
.dblc { width: 18px; height: 18px; }
.fic { width: 18px; height: 18px; margin: 24px 0 0 5px; }
.vert { writing-mode: vertical-rl; font-size: 21px; font-weight: 600; line-height: 26px; letter-spacing: .015em; }
.filters .vert { margin: 13px 2px 0 0; }
.viz { display: flex; flex-direction: column; align-items: center; width: 52px; padding-top: 20px; background: #f3f2f1; border-left: 1px solid #e1dfdd; }
.viz .vert { margin: 22px 4px 0 0; letter-spacing: .036em; }
.data { width: 271px; background: #f3f2f1; border-left: 1px solid #e1dfdd; padding: 14px 7px 0 6px; }
.dh { display: flex; align-items: center; justify-content: space-between; padding: 0 5px 0 6px; height: 30px; font-size: 22px; font-weight: 600; letter-spacing: -.02em; }
.flip { width: 18px; height: 18px; transform: scaleX(-1); }
.ds { display: flex; align-items: center; gap: 9px; height: 36px; margin-top: 24px; padding: 2px 0 0 18px; background: #fff; border: 1px solid #d2d0ce; border-bottom-color: #605e5c; border-radius: 5px; color: #757371; font-size: 20.400px; }
.ds svg { width: 22px; height: 22px; margin-bottom: 4px; }
.data ul { list-style: none; margin: 14px 0 0; padding: 0; }
.data li { position: relative; display: flex; align-items: center; height: 36px; padding-left: 18px; font-size: 17.700px; color: #323130; }
.c { width: 10px; height: 18px; margin-right: 10px; }
.g { width: 18px; height: 18px; margin-right: 9px; }
.badge { position: absolute; left: 47px; top: 17px; width: 18px; height: 18px; }

/* page strip */
.pages { display: flex; height: 53px; background: #f3f2f1; }
.dev { display: flex; justify-content: center; width: 36px; height: 46px; margin-left: 15px; padding-top: 8px; }
.dev.on { border-bottom: 4px solid #117865; }
.dev svg { width: 30px; height: 24px; }
.dev.on svg { margin-right: 2px; }
.ph { margin-left: 30px; padding-top: 6px; } .ph svg { width: 20px; height: 31px; }
.arr { width: 8px; height: 12px; margin: 20px 0 0 23px; }
.a2 { margin-left: 25px; }
.ptab { width: 113px; height: 53px; margin-left: 10px; background: #fff; border-left: 1px solid #b3b0ad; border-bottom: 6px solid #117865; text-align: center; font-size: 17.800px; font-weight: 500; line-height: 54px; -webkit-text-stroke: .3px #252423; }
.padd { display: flex; align-items: center; justify-content: center; width: 60px; height: 53px; background: #117865; }
.padd svg { width: 16px; height: 16px; }

.status { display: flex; align-items: center; height: 35px; background: #f3f2f1; border-top: 1px solid #dddbd9; padding: 0 0 1px 6px; font-size: 18px; color: #484644; }
.status > span:first-child { width: 1594px; padding-top: 3px; letter-spacing: -.015em; }
.status > svg { width: 190px; height: 34px; }
.status .pct { width: 64px; padding-left: 16px; font-size: 17px; color: #605e5c; }
.status .fit { width: 24px; height: 18px; margin-left: 15px; }

/* taskbar */
.taskbar { display: flex; height: 73px; background: #1c1c1c; border-top: 1px solid #000; box-shadow: inset 0 3px #3f3f3f; color: #fff; font-size: 17.400px; }
.slot { position: relative; display: flex; justify-content: center; align-items: center; width: 66px; height: 72px; }
.slot svg { width: 36px; height: 36px; }
.widgets { margin: 0 282px 0 15px; }
.run::after { content: ""; position: absolute; bottom: 6px; width: 9px; height: 6px; border-radius: 3px; background: #9a9a9a; }
.active::before { content: ""; position: absolute; left: 3px; top: 6px; width: 53px; height: 60px; border-radius: 6px; background: #2b2b2b; border: 1px solid #3a3a3a; box-shadow: 5px 0 0 -1px #1c1c1c, 6px 0 0 -1px #3a3a3a; }
.active svg { position: relative; }
.active::after { content: ""; position: absolute; bottom: 6px; width: 24px; height: 5px; border-radius: 3px; background: #4cc2ff; }
.pc { font: 700 12px "Open Sans", sans-serif; fill: #fff; letter-spacing: 0; }
.tray { display: flex; align-items: center; margin-left: 102px; line-height: 23px; }
.up { width: 16px; height: 10px; }
.lang { width: 97px; text-align: center; padding-top: 0; }
.net { width: 100px; height: 32px; margin-left: -5px; }
.clock { width: 125px; text-align: right; white-space: nowrap; letter-spacing: -.005em; }
.bell { width: 24px; height: 26px; margin-left: 12px; }
```
FILE: charts.js
```js
// Builds the report visuals. Coordinates are window pixels; the canvas starts at (61, 240).
const OX = 61, OY = 240;
const host = document.getElementById('charts');

function box(x, y, w, h, inner) {
  const d = document.createElement('div');
  d.className = 'viz-box';
  d.style.left = (x - OX) + 'px';
  d.style.top = (y - OY) + 'px';
  d.innerHTML = `<svg width="${w}" height="${h}" viewBox="${x} ${y} ${w} ${h}">${inner}</svg>`;
  host.appendChild(d);
}
const text = (x, y, s, a = 'start', cls = '', len = 0) =>
  `<text x="${x}" y="${y}" text-anchor="${a}" class="${cls}"${len ? ` textLength="${len}" lengthAdjust="spacingAndGlyphs"` : ''}>${s}</text>`;

function bars(o) {
  let s = `<rect x="${o.x + .5}" y="${o.y + .5}" width="${o.w - 1}" height="${o.h - 1}" fill="#fceae4" stroke="${o.border}"/>`;
  if (o.head) s += `<rect x="${o.x + 1}" y="${o.y + 1}" width="${o.w - 2}" height="${o.head}" fill="#ece3e2"/>`;
  o.title.forEach(t => { s += text(o.tx, t[1], t[0], 'start', o.cls, t[2]); });
  o.ticks.forEach(t => {
    s += `<path class="grid" d="M${t[0]} ${o.gy[0]}V${o.gy[1]}"/>`;
    s += text(t[0], o.axisY, t[1], 'middle');
  });
  o.rows.forEach((r, i) => {
    const cy = o.y0 + i * o.pitch;
    s += text(o.cx, cy + 4, r[0], 'end');
    s += `<rect x="${o.bx}" y="${cy - o.bh / 2}" width="${r[2]}" height="${o.bh}" fill="${o.color}"/>`;
    s += r[3] ? text(o.bx + r[2] - 8, cy + 4.5, r[1], 'end', 'in') : text(o.bx + r[2] + 7, cy + 4, r[1]);
  });
  box(o.x, o.y, o.w, o.h, s + (o.extra || ''));
}

const k = .58;
bars({
  x: 224, y: 367, w: 142, h: 540, border: '#85608c', head: 51, cls: 'seg', tx: 230,
  title: [['revenue by', 388, 91], ['customer name', 409.5, 126]],
  ticks: [[272.5, '0M'], [301.5, '50M'], [330.5, '10...']], gy: [426, 882], axisY: 894,
  y0: 441, pitch: 19.26, cx: 264, bx: 272, bh: 15, color: '#74331c',
  rows: [['Ele...', '66M', 38.5], ['Ex...', '8M', 8 * k], ['Pr...', '6M', 3.6], ['Ele...', '6M', 3.5], ['Inf...', '5M', 3.2], ['Co...', '4M', 2.6], ['Su...', '4M', 2.4], ['Lo...', '3M', 2], ['Ac...', '3M', 2], ['Ni...', '3M', 2], ['Epi...', '3M', 1.8], ['Fo...', '3M', 1.7], ['Ele...', '3M', 1.6], ['M...', '2M', 1.4], ['Su...', '2M', 1.4], ['Atl...', '2M', 1.3], ['No...', '2M', 1.2], ['Int...', '2M', 1.2], ['Un...', '2M', 1.1], ['Path', '2M', 1], ['Le...', '2M', 1], ['Elite', '1M', .9], ['Fla...', '1M', .8]],
  extra: '<rect x="355" y="427" width="7" height="453" rx="3.5" fill="#efe5e3"/><rect x="355" y="427" width="7" height="273" rx="3.5" fill="#b5adab"/>'
});
bars({
  x: 381, y: 369, w: 135.500, h: 538, border: '#6b6463', cls: 'blk', tx: 388,
  title: [['Sales QTY by', 389, 126], ['market zone', 413, 117]],
  ticks: [[428.5, '0.0M'], [465.5, '0.1M']], gy: [431, 882], axisY: 895,
  y0: 457.7, pitch: 33.05, cx: 419.5, bx: 428, bh: 26.5, color: '#74331c',
  rows: [['De...', '0.14M', 53.5, 1], ['M...', '0.04M', 15.5], ['Na...', '0.04M', 15.3], ['Ko...', '0.04M', 13], ['Ah...', '0.03M', 11], ['Bh...', '0.02M', 5.8], ['Lu...', '0.01M', 5.5], ['Hy...', '0.01M', 4.7], ['Ch...', '0.01M', 2.6], ['Bh...', '0.00M', 1.2], ['Ka...', '0.00M', .8], ['Su...', '0.00M', .8], ['Pa...', '0.00M', .8]]
});
bars({
  x: 533, y: 369, w: 152, h: 538, border: '#6b6463', cls: 'blk soft', tx: 539.5,
  title: [['TOP 7', 389, 57], ['customers by', 413, 129], ['revenue', 438, 75]],
  ticks: [[584.5, '0M'], [624.5, '50M'], [664.5, '100M']], gy: [459, 882], axisY: 895,
  y0: 500, pitch: 56, cx: 575.5, bx: 584, bh: 44, color: '#6f2153',
  rows: [['Ele...', '66M', 52.7], ['Exc...', '8M', 6.4], ['Pre...', '6M', 4.9], ['Ele...', '6M', 4.7], ['Inf...', '5M', 4.1], ['Co...', '4M', 3.3], ['Sur...', '4M', 3.1]]
});
bars({
  x: 698, y: 369, w: 151.500, h: 538, border: '#6b6463', cls: 'blk soft', tx: 704,
  title: [['TOP 7', 389, 57], ['products by', 413, 112.500], ['revenue', 438, 76]],
  ticks: [[749.5, '0M'], [789.7, '50M'], [830.3, '100M']], gy: [459, 882], axisY: 895,
  y0: 500, pitch: 56, cx: 740.5, bx: 749, bh: 44, color: '#6f2153',
  rows: [['(Bla...', '65M', 52.5], ['Pro...', '4M', 3.1], ['Pro...', '4M', 3], ['Pro...', '3M', 2.8], ['Pro...', '3M', 2.7], ['Pro...', '3M', 2.3], ['Pro...', '3M', 2.1]]
});

// Revenue trend line
const xs = [933.5, 1023, 1106, 1195.5, 1281.7, 1371];
const yv = v => 834.5 - (v - 14) * 28.35;
const months = ['Jan 2020', 'Feb 2020', 'Mar 2020', 'Apr 2020', 'May 2020', 'Jun 2020'];
let s = '<rect x="867" y="398" width="530" height="474.500" fill="#dfeeff"/><path d="M867 398.5h530M867.5 398v474M867 872h530" stroke="#c3c8ce" fill="none"/><path d="M1396.500 399v473" stroke="#484644"/>';
s += text(874, 419, 'REVENUE TREND', 'start', 'blk', 165);
for (let v = 14; v <= 28; v += 2) s += `<path class="bgrid" d="M923 ${yv(v)}H1379"/>` + text(915, yv(v) + 4, v + 'M', 'end');
xs.forEach((x, i) => { s += `<path class="bgrid" d="M${x} 438V834"/>` + text(x, 849, months[i], 'middle'); });
s += '<path d="M1106 438V834" stroke="#8e979f" stroke-width="1.8"/>';
const vals = [25.7, 26.9, 26.38, 25.28, 23.28, 14.7];
s += `<polyline points="${vals.map((v, i) => xs[i] + ',' + yv(v)).join(' ')}" fill="none" stroke="#6f2153" stroke-width="2.600"/><circle cx="1106" cy="${yv(26.38)}" r="3" fill="#6f2153"/>`;
[[939, 520, '25.7M'], [1023, 459, '26.9M'], [1106, 475, '26.4M'], [1195, 506, '25.3M'], [1281.5, 562, '23.3M'], [1365, 830, '14.7M']].forEach(l => { s += text(l[0], l[1], l[2], 'middle'); });
s += text(1152, 866, 'Year', 'middle', 'axis');
s += '<text class="axis" text-anchor="middle" transform="translate(885 636) rotate(-90)">revenue</text>';
box(867, 398, 530, 475, s);
```
